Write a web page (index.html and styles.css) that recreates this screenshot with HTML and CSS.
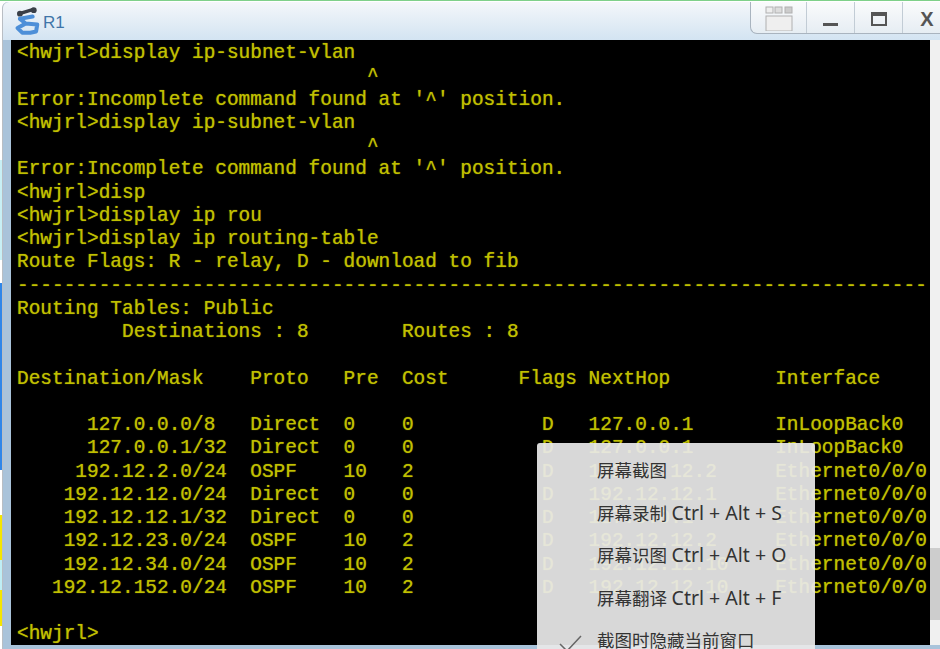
FILE: index.html
```html
<!DOCTYPE html>
<html lang="zh">
<head>
<meta charset="utf-8">
<title>R1</title>
<link rel="stylesheet" href="styles.css">
</head>
<body>
<div class="window">
  <header class="titlebar">
    <svg class="app-icon" width="30" height="30" viewBox="0 0 26 26">
      <path d="M7 7 L17 4" stroke="#3a3f48" stroke-width="3" stroke-linecap="round"/>
      <circle cx="6" cy="7.500" r="2.500" fill="#3a3f48"/><circle cx="18" cy="4.500" r="2.500" fill="#3a3f48"/>
      <path d="M17 10 L6 12 L11 16 L4 20 L8 24 L15 24 M11 16 L21 17 L20 23 L15 24" fill="none" stroke="#4d8fd8" stroke-width="3.500" stroke-linejoin="round" stroke-linecap="round"/>
    </svg>
    <span class="title">R1</span>
    <div class="controls">
      <div class="ctl ctl-snap">
        <svg width="28" height="25" viewBox="0 0 28 25"><rect x="1" y="1" width="7" height="6" fill="#eee" stroke="#b0b0b0"/><rect x="10" y="1" width="7" height="6" fill="#ddd" stroke="#b0b0b0"/><rect x="20" y="1" width="7" height="6" fill="#ccc" stroke="#b0b0b0"/><rect x="1" y="10" width="26" height="15" fill="#efefef" stroke="#b0b0b0"/></svg>
      </div>
      <div class="ctl ctl-min"><span class="min-bar"></span></div>
      <div class="ctl ctl-max"><span class="max-box"></span></div>
      <div class="ctl ctl-close">X</div>
    </div>
  </header>
  <div class="body">
<pre class="terminal">&lt;hwjrl&gt;display ip-subnet-vlan
                              ^
Error:Incomplete command found at '^' position.
&lt;hwjrl&gt;display ip-subnet-vlan
                              ^
Error:Incomplete command found at '^' position.
&lt;hwjrl&gt;disp
&lt;hwjrl&gt;display ip rou
&lt;hwjrl&gt;display ip routing-table
Route Flags: R - relay, D - download to fib
------------------------------------------------------------------------------
Routing Tables: Public
         Destinations : 8        Routes : 8

Destination/Mask    Proto   Pre  Cost      Flags NextHop         Interface

      127.0.0.0/8   Direct  0    0           D   127.0.0.1       InLoopBack0
      127.0.0.1/32  Direct  0    0           D   127.0.0.1       InLoopBack0
     192.12.2.0/24  OSPF    10   2           D   192.12.12.2     Ethernet0/0/0
    192.12.12.0/24  Direct  0    0           D   192.12.12.1     Ethernet0/0/0
    192.12.12.1/32  Direct  0    0           D   127.0.0.1       Ethernet0/0/0
    192.12.23.0/24  OSPF    10   2           D   192.12.12.2     Ethernet0/0/0
    192.12.34.0/24  OSPF    10   2           D   192.12.12.10    Ethernet0/0/0
   192.12.152.0/24  OSPF    10   2           D   192.12.12.10    Ethernet0/0/0

&lt;hwjrl&gt;</pre>
    <div class="scrollbar"><div class="thumb"></div></div>
  </div>
</div>
<ul class="menu">
  <li>屏幕截图</li>
  <li>屏幕录制 <span class="keys">Ctrl + Alt + S</span></li>
  <li>屏幕识图 <span class="keys">Ctrl + Alt + O</span></li>
  <li>屏幕翻译 <span class="keys">Ctrl + Alt + F</span></li>
  <li class="checked">
    <svg class="check" width="24" height="18" viewBox="0 0 24 18"><path d="M1 9 L8 16 L22 1" fill="none" stroke="#666" stroke-width="1.500"/></svg>
    截图时隐藏当前窗口
  </li>
</ul>
</body>
</html>
```

FILE: styles.css
```css
* { box-sizing: border-box; }
html, body { margin: 0; height: 649px; overflow: hidden; }
body {
  position: relative;
  padding: 2px 0 0 2px;
  background: linear-gradient(#7fd08a 0 1px, #fff 1px 160px, #c8f0f5 160px 260px, #fff 260px 283px, #2f86e8 283px 470px, #fff 470px 515px, #f5e600 515px 560px, #bfeef5 560px 590px, #f5e600 590px 626px, #fff 626px);
}

.window {
  height: 647px;
  background: #a9c3da;
  border-top-left-radius: 6px;
  border-left: 1px solid #b9bec4;
  display: flex;
  flex-direction: column;
  padding: 0 0 4px 8px;
}

.titlebar {
  height: 38px;
  flex: none;
  display: flex;
  align-items: center;
  background: linear-gradient(#f4f7fa, #d3e4f2);
  margin-left: -8px;
  border-top-left-radius: 6px;
}
.app-icon { margin: 0 0 2px 10px; flex: none; }
.title {
  font: 17px "Liberation Sans", sans-serif;
  color: #3f74a8;
  margin-top: 4px;
}
.controls {
  margin-left: auto;
  margin-right: -13px;
  align-self: flex-start;
  display: flex;
  height: 32px;
  border: 1px solid #a9b4bf;
  border-top: 0;
  border-right: 0;
  border-bottom-left-radius: 7px;
  background: linear-gradient(#fafbfc, #e6edf3);
}
.ctl {
  height: 31px;
  display: flex;
  align-items: center;
  justify-content: center;
  border-right: 1px solid #c2ccd5;
}
.ctl-snap { width: 56px; }
.ctl-min { width: 48px; }
.ctl-max { width: 48px; }
.ctl-close {
  width: 50px;
  border-right: 0;
  font: bold 20px "Liberation Sans", sans-serif;
  color: #555;
  padding-right: 2px;
  padding-top: 3px;
}
.ctl-snap svg { margin-top: 2px; }
.min-bar { width: 15px; height: 3px; background: #555; margin-top: 14px; }
.max-box { width: 16px; height: 14px; border: 2px solid #555; border-top-width: 4px; margin-top: 3px; }

.body { flex: 1; min-height: 0; display: flex; }
.terminal {
  flex: 1;
  margin: 0;
  background: #000;
  color: #c0c000;
  font: 19.440px/23.250px "Liberation Mono", "Courier New", monospace;
  padding: 2px 0 0 6px;
  overflow: hidden;
  text-shadow: 0 0 1px #a0a000;
  white-space: pre;
}
.scrollbar { width: 10px; flex: none; background: #f0f0f0; padding-top: 508px; }
.thumb { height: 72px; background: #cdcdcd; }

.menu {
  position: absolute;
  left: 537px;
  top: 443px;
  width: 278px;
  height: 206px;
  margin: 0;
  padding: 6px 0 0 60px;
  list-style: none;
  background: rgba(232, 232, 232, 0.93);
  border-radius: 3px 3px 0 0;
  font: 17.500px "Noto Sans", "Noto Sans CJK SC", sans-serif;
  color: #333;
}
.menu li { height: 42.500px; line-height: 42.500px; position: relative; white-space: nowrap; }
.keys { font-size: 19.500px; }
.check { position: absolute; left: -38px; top: 16px; }
```
